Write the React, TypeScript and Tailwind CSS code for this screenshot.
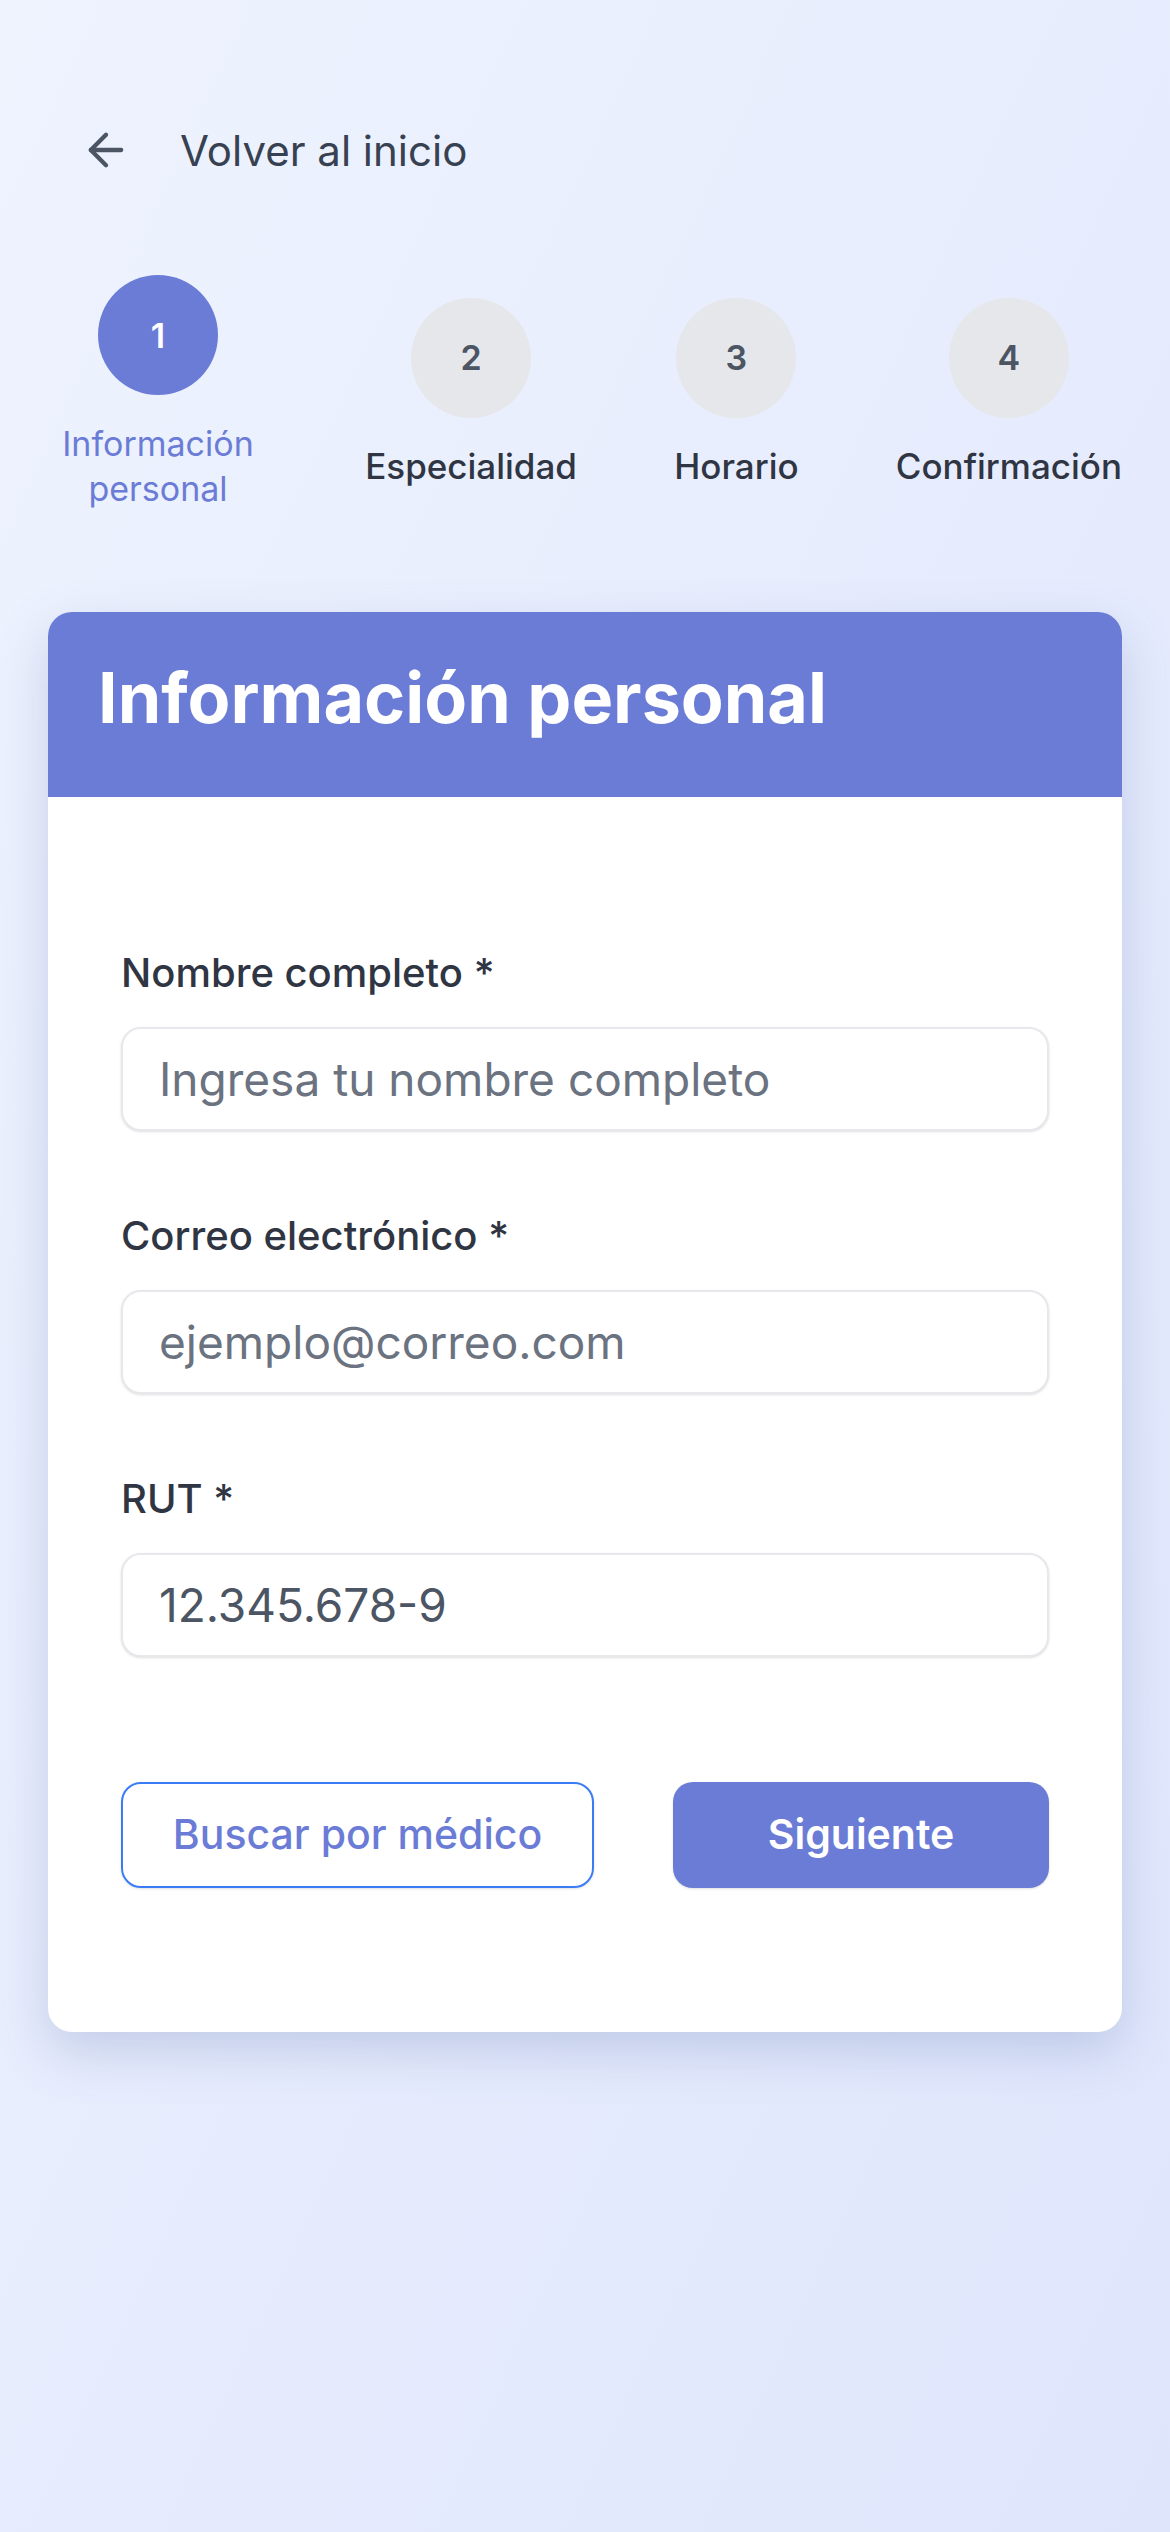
import React from 'react';
import { ArrowLeft } from 'lucide-react';

const steps = [
  { n: 1, label: 'Información personal' },
  { n: 2, label: 'Especialidad' },
  { n: 3, label: 'Horario' },
  { n: 4, label: 'Confirmación' },
];

function Field({ label, placeholder, value }: { label: string; placeholder?: string; value?: string }) {
  return (
    <div className="flex flex-col">
      <label className="text-[40px] font-medium text-[#2f3542] leading-[54px] mb-[27px]">{label}</label>
      <div className="h-[104px] rounded-[20px] border-2 border-[#e7e8ec] bg-white shadow-sm flex items-center px-[36px]">
        {value ? (
          <span className="text-[46px] text-[#4b5563]">{value}</span>
        ) : (
          <span className="text-[46px] text-[#6b7280]">{placeholder}</span>
        )}
      </div>
    </div>
  );
}

export default function App() {
  return (
    <div
      className="min-h-[2532px] w-full bg-gradient-to-br from-[#eef3fe] to-[#dfe6fc]"
      style={{ fontFamily: 'Inter, "Noto Sans", sans-serif' }}
    >
      {/* back link */}
      <div className="flex items-center pt-[124px] pl-[80px] gap-[48px] h-[176px]">
        <ArrowLeft size={52} strokeWidth={2} className="text-[#4b5563]" />
        <span className="text-[42px] text-[#374151]">Volver al inicio</span>
      </div>

      {/* stepper */}
      <div className="flex items-center justify-between px-[48px] mt-[99px]">
        {steps.map((s) => {
          const active = s.n === 1;
          return (
            <div key={s.n} className="flex flex-col items-center">
              <div
                className={
                  active
                    ? 'w-[120px] h-[120px] rounded-full bg-[#6b7cd6] text-white flex items-center justify-center text-[34px] font-semibold'
                    : 'w-[120px] h-[120px] rounded-full bg-[#e6e7eb] text-[#4b5563] flex items-center justify-center text-[34px] font-semibold'
                }
              >
                {s.n}
              </div>
              <span
                className={
                  active
                    ? 'mt-[26px] text-[34px] leading-[45px] text-center text-[#6b7cd6] max-w-[220px]'
                    : 'mt-[26px] text-[35px] leading-[45px] text-center text-[#2f3542] font-medium'
                }
              >
                {s.label}
              </span>
            </div>
          );
        })}
      </div>

      {/* card */}
      <div className="mx-[48px] mt-[101px] rounded-3xl bg-white overflow-hidden shadow-[0_20px_50px_rgba(90,110,170,0.25)]">
        <div className="bg-[#6b7cd6] h-[185px] flex items-center px-[50px] pb-[14px]">
          <h1 className="text-[70px] font-bold text-white">Información personal</h1>
        </div>
        <div className="px-[73px] pt-[149px] pb-[144px]">
          <div className="flex flex-col gap-[78px]">
            <Field label="Nombre completo *" placeholder="Ingresa tu nombre completo" />
            <Field label="Correo electrónico *" placeholder="ejemplo@correo.com" />
            <Field label="RUT *" value="12.345.678-9" />
          </div>
          <div className="flex justify-between mt-[125px]">
            <button className="w-[473px] h-[106px] rounded-[20px] border-2 border-[#3b7cf5] text-[#6b7cd6] text-[41px] font-medium shadow-sm">
              Buscar por médico
            </button>
            <button className="w-[376px] h-[106px] rounded-[20px] bg-[#6b7cd6] text-white text-[41px] font-semibold shadow-sm">
              Siguiente
            </button>
          </div>
        </div>
      </div>
    </div>
  );
}
